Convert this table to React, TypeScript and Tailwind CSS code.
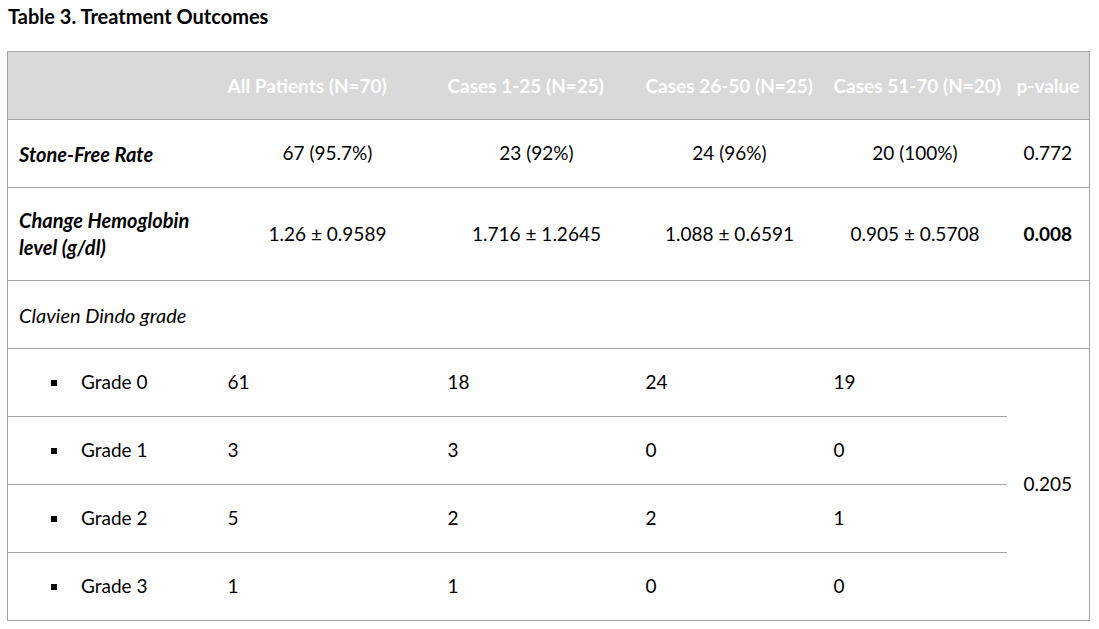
import React from "react";

const font = { fontFamily: "Lato, 'Open Sans', sans-serif" };

function GradeRow({ label, vals, last, pcell }: { label: string; vals: string[]; last?: boolean; pcell?: boolean }) {
  const b = last ? "" : "border-b border-[#a6a6a6]";
  return (
    <tr className="h-[68px]">
      <td className={`${b} pl-[43px] align-middle`}>
        <div className="flex items-center">
          <span className="inline-block w-[6px] h-[6px] bg-black"></span>
          <span className="ml-[24px]">{label}</span>
        </div>
      </td>
      {vals.map((v, i) => (
        <td key={i} className={`${b} pl-[10px] align-middle`}>{v}</td>
      ))}
      {pcell && (
        <td rowSpan={4} className="text-center align-middle">0.205</td>
      )}
    </tr>
  );
}

export default function App() {
  return (
    <div className="bg-white w-[1099px] h-[629px] text-black text-[19px]" style={font}>
      <div className="pl-[8px] pt-[3px] h-[51px] text-[20px] font-bold leading-[26px]">Table 3. Treatment Outcomes</div>
      <div className="pl-[7px]">
        <table className="border-collapse table-fixed w-[1082px] border border-[#a6a6a6]">
          <colgroup>
            <col className="w-[210px]" />
            <col className="w-[220px]" />
            <col className="w-[198px]" />
            <col className="w-[188px]" />
            <col className="w-[183px]" />
            <col className="w-[83px]" />
          </colgroup>
          <tbody>
            <tr className="h-[68px] bg-[#d9d9d9] text-white font-bold">
              <td className="border-b border-[#a6a6a6]"></td>
              <td className="border-b border-[#a6a6a6] pl-[10px] pt-[2px] whitespace-nowrap">All Patients (N=70)</td>
              <td className="border-b border-[#a6a6a6] pl-[10px] pt-[2px] whitespace-nowrap">Cases 1-25 (N=25)</td>
              <td className="border-b border-[#a6a6a6] pl-[10px] pt-[2px] whitespace-nowrap">Cases 26-50 (N=25)</td>
              <td className="border-b border-[#a6a6a6] pl-[10px] pt-[2px] whitespace-nowrap">Cases 51-70 (N=20)</td>
              <td className="border-b border-[#a6a6a6] pl-[10px] pt-[2px] whitespace-nowrap">p-value</td>
            </tr>
            <tr className="h-[68px]">
              <td className="border-b border-[#a6a6a6] pl-[11px] font-bold italic text-[20px] whitespace-nowrap">Stone-Free Rate</td>
              <td className="border-b border-[#a6a6a6] text-center">67 (95.7%)</td>
              <td className="border-b border-[#a6a6a6] text-center">23 (92%)</td>
              <td className="border-b border-[#a6a6a6] text-center">24 (96%)</td>
              <td className="border-b border-[#a6a6a6] text-center">20 (100%)</td>
              <td className="border-b border-[#a6a6a6] text-center">0.772</td>
            </tr>
            <tr className="h-[93px]">
              <td className="border-b border-[#a6a6a6] pl-[11px] font-bold italic text-[20px] leading-[27px] whitespace-nowrap">Change Hemoglobin<br />level (g/dl)</td>
              <td className="border-b border-[#a6a6a6] text-center">1.26 ± 0.9589</td>
              <td className="border-b border-[#a6a6a6] text-center">1.716 ± 1.2645</td>
              <td className="border-b border-[#a6a6a6] text-center">1.088 ± 0.6591</td>
              <td className="border-b border-[#a6a6a6] text-center">0.905 ± 0.5708</td>
              <td className="border-b border-[#a6a6a6] text-center font-bold">0.008</td>
            </tr>
            <tr className="h-[68px]">
              <td colSpan={6} className="border-b border-[#a6a6a6] pl-[11px] italic text-[20px]">Clavien Dindo grade</td>
            </tr>
            <GradeRow label="Grade 0" vals={["61", "18", "24", "19"]} pcell />
            <GradeRow label="Grade 1" vals={["3", "3", "0", "0"]} />
            <GradeRow label="Grade 2" vals={["5", "2", "2", "1"]} />
            <GradeRow label="Grade 3" vals={["1", "1", "0", "0"]} last />
          </tbody>
        </table>
      </div>
    </div>
  );
}
